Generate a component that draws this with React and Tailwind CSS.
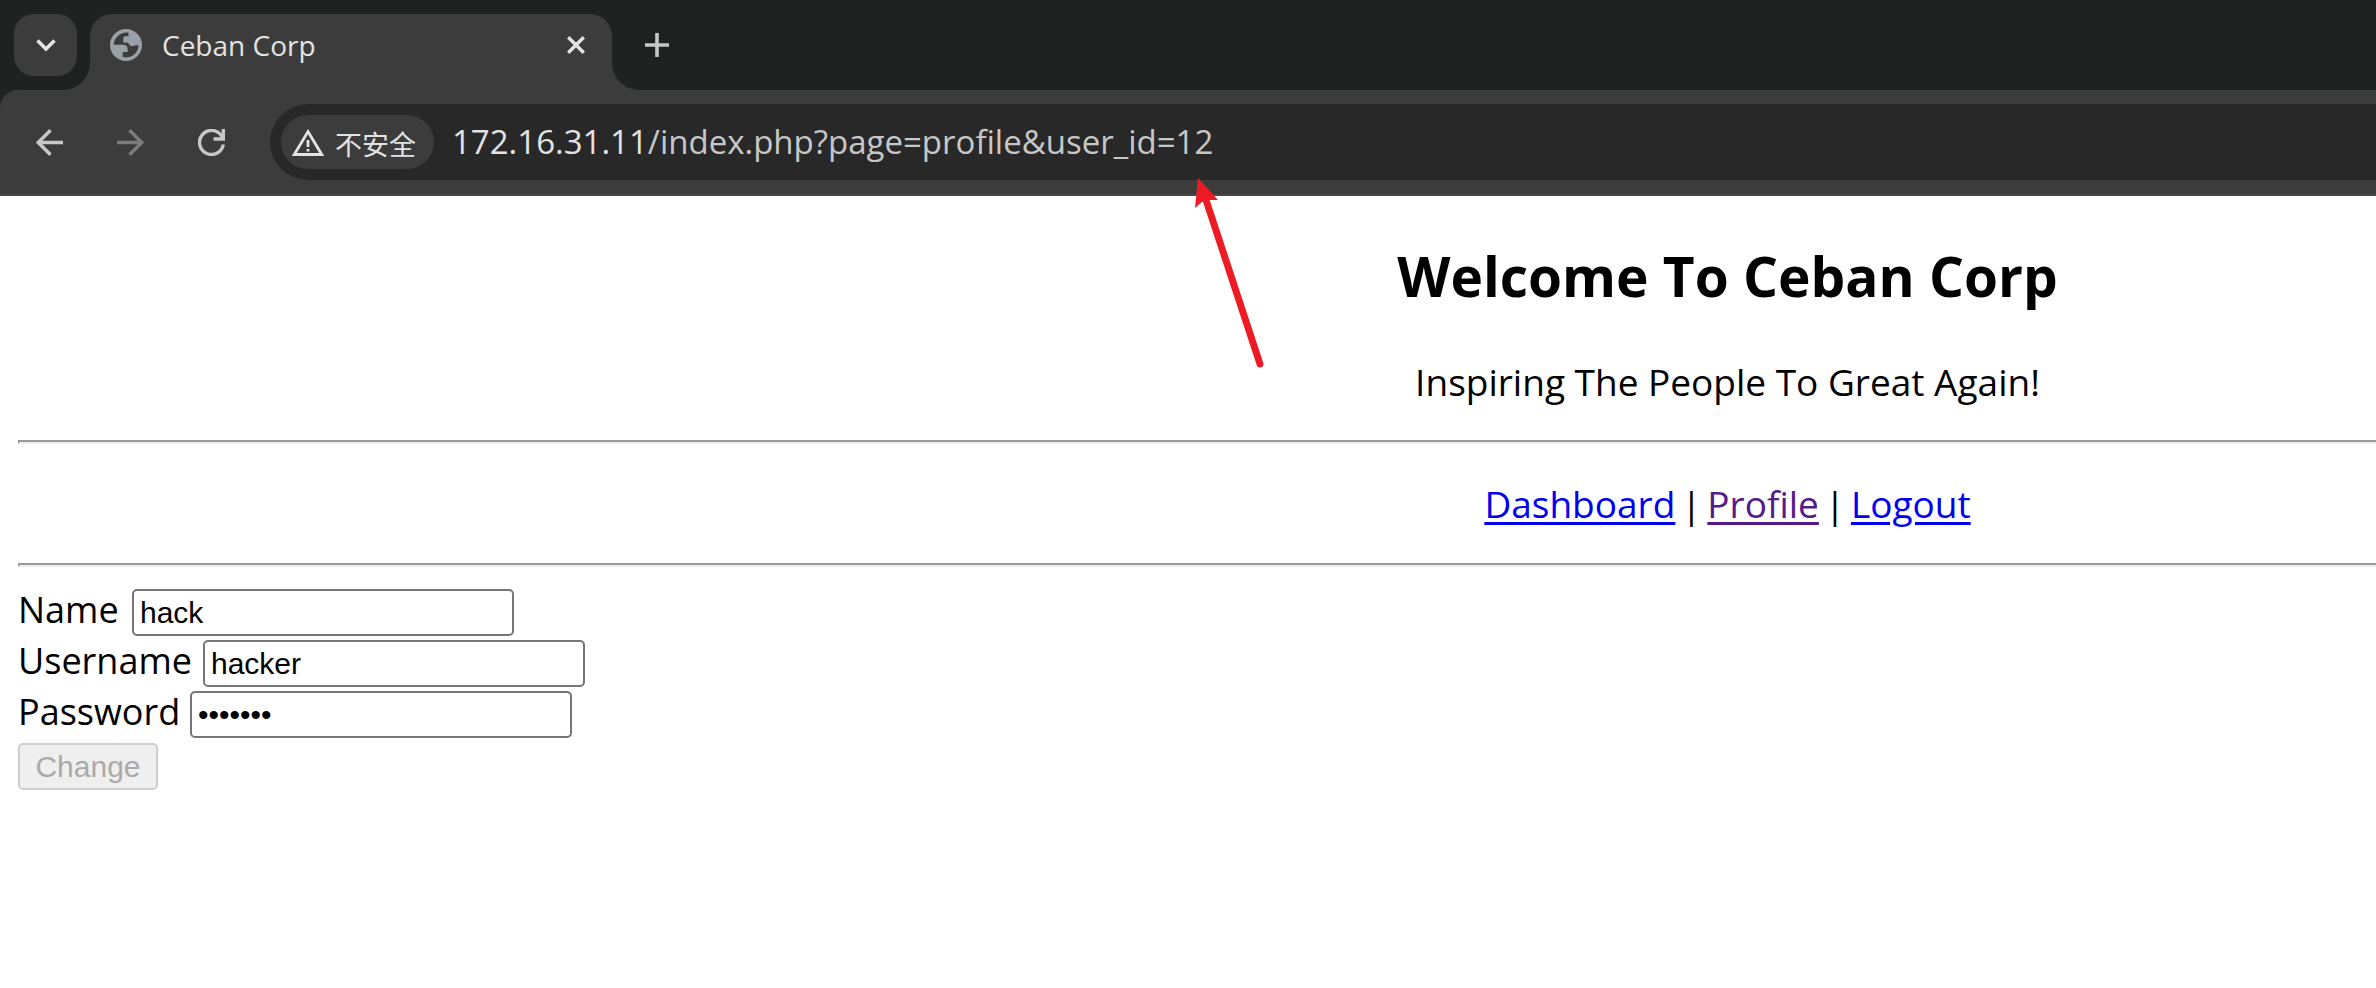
const rows = [
  { id: "name", label: "Name", type: "text", value: "hack", width: "w-[105px]" },
  { id: "username", label: "Username", type: "text", value: "hacker", width: "w-[176px]" },
  { id: "password", label: "Password", type: "password", value: "hackers", width: "w-[163px]" },
];

function TabStrip() {
  return (
    <header className="flex h-[90px] items-start bg-[#1f2221] pt-[14px] pl-[14px] text-[#e3e3e3]">
      <button aria-label="Search tabs" className="flex h-[62px] w-[63px] items-center justify-center rounded-[20px] bg-[#3c3c3c]">
        <svg width="20" height="14" viewBox="0 0 20 14" fill="none" stroke="currentColor" strokeWidth="3.6">
          <path d="M1.5 2.5 10 11l8.500-8.500" />
        </svg>
      </button>
      <div className="relative ml-[13px] flex h-[76px] w-[522px] items-start rounded-t-[22px] bg-[#3c3c3c] pt-[13px] pr-6 pl-5">
        <svg className="absolute bottom-0 -left-7" width="28" height="28" viewBox="0 0 28 28" fill="#3c3c3c">
          <path d="M28 0v28H0C16 28 28 16 28 0z" />
        </svg>
        <svg className="absolute -right-7 bottom-0" width="28" height="28" viewBox="0 0 28 28" fill="#3c3c3c">
          <path d="M0 0v28h28C12 28 0 16 0 0z" />
        </svg>
        <svg className="mt-[2px]" width="32" height="32" viewBox="0 0 32 32">
          <circle cx="16" cy="16" r="16" fill="#9aa0a8" />
          <path
            fill="#3c3c3c"
            d="M18.500 3.700C11 2.500 4.300 8 3.700 15.700H13c3.200 0 4.700 1.800 4.700 4.800v2.500h-5v4.800c8.200 2.700 15.800-3.300 15.800-11.700l-4.400 0.300c-1.500 1.300-3.500 1-4.800-0.600-0.500-1.600-1.300-2.200-2.800-2.200h-3.200V9.500c0-1.500 0.800-2.200 2-2.200h3.200z"
          />
        </svg>
        <span className="flex-1 pl-5 text-[28px] leading-[36px] whitespace-nowrap">Ceban Corp</span>
        <button aria-label="Close tab" className="flex h-9 w-6 items-center justify-center">
          <svg width="18" height="18" viewBox="0 0 18 18" stroke="currentColor" strokeWidth="3.400">
            <path d="M1.200 1.200l15.600 15.600M16.800 1.200 1.200 16.800" />
          </svg>
        </button>
      </div>
      <button aria-label="New tab" className="ml-[28px] flex h-[62px] w-[34px] items-center justify-center text-[#c7c7c7]">
        <svg width="24" height="24" viewBox="0 0 24 24" stroke="currentColor" strokeWidth="3.600">
          <path d="M12 0v24M0 12h24" />
        </svg>
      </button>
    </header>
  );
}

function Toolbar() {
  return (
    <div className="bg-[#1f2221]">
      <div className="flex h-[106px] items-start rounded-tl-[18px] border-b-2 border-[#484747] bg-[#3c3c3c] pt-[14px] pl-9 text-[#c7c7c7]">
        <nav className="flex h-[76px] items-center gap-[54px]">
          <button aria-label="Back">
            <svg width="27" height="27" viewBox="0 0 27 27" fill="none" stroke="currentColor" strokeWidth="3.400">
              <path d="M27 13.500H2.500M14.500 1.200 2.200 13.500l12.300 12.300" />
            </svg>
          </button>
          <button aria-label="Forward" className="text-[#7b7b7b]">
            <svg width="27" height="27" viewBox="0 0 27 27" fill="none" stroke="currentColor" strokeWidth="3.400">
              <path d="M0 13.500h24.500M12.500 1.200l12.300 12.300-12.300 12.300" />
            </svg>
          </button>
          <button aria-label="Reload">
            <svg width="27" height="27" viewBox="0 0 27 27" fill="none" stroke="currentColor" strokeWidth="3.400">
              <path d="M25.300 15.500A12 12 0 1 1 22.500 5.500L25 9" />
              <path d="M25.300 0v10H15.500" />
            </svg>
          </button>
        </nav>
        <div className="ml-[45px] flex h-[76px] flex-1 items-center rounded-l-full bg-[#282828] pl-[11px] whitespace-nowrap">
          <button className="flex h-[54px] w-[153px] items-center rounded-full bg-[#3c3c3c] pl-[11px] text-[27px] leading-[36px] text-[#e3e3e3]">
            <svg width="32" height="27" viewBox="0 0 32 27" fill="none" stroke="currentColor" strokeWidth="2.800">
              <path d="M16 2.600 2.300 25.500h27.400z" />
              <path d="M16 11v7M16 20v2.600" />
            </svg>
            <span className="pt-1 pl-[11px] font-['Noto_Sans_CJK_SC',sans-serif]">不安全</span>
          </button>
          <span className="pl-[18px] text-[33px] leading-[44px]">
            <span className="text-[#e3e3e3]">172.16.31.11</span>/index.php?page=profile&amp;user_id=12
          </span>
        </div>
      </div>
    </div>
  );
}

function Separator() {
  return <span className="w-8 text-center">|</span>;
}

export default function App() {
  return (
    <div className="relative min-h-screen overflow-hidden bg-white font-['Open_Sans','Noto_Sans_CJK_SC',sans-serif] text-black">
      <TabStrip />
      <Toolbar />
      <main className="pl-[18px] text-[37px] leading-[48px]">
        <div className="w-[145%] text-center">
          <h1 className="pt-[44px] text-[55px] leading-[72px] font-bold">Welcome To Ceban Corp</h1>
          <p className="pt-[46px] pb-[34px]">Inspiring The People To Great Again!</p>
          <hr className="h-1 border-t-2 border-b-2 border-l-2 border-t-[#9a9a9a] border-b-[#eeeeee] border-l-[#9a9a9a]" />
          <nav className="flex justify-center pt-9 pb-[35px] [&>a]:underline [&>a]:decoration-[3px] [&>a]:underline-offset-4">
            <a href="#dashboard" className="text-[#0000ee]">Dashboard</a>
            <Separator />
            <a href="#profile" className="text-[#551a8b]">Profile</a>
            <Separator />
            <a href="#logout" className="text-[#0000ee]">Logout</a>
          </nav>
          <hr className="h-1 border-t-2 border-b-2 border-l-2 border-t-[#9a9a9a] border-b-[#eeeeee] border-l-[#9a9a9a]" />
        </div>
        <form className="pt-5" onSubmit={(e) => e.preventDefault()}>
          {rows.map((row) => (
            <div key={row.id} className="flex h-[51px] items-center gap-[9px]">
              <label htmlFor={row.id} className={`${row.width} pb-1.5 text-[36px] whitespace-nowrap`}>{row.label}</label>
              <input
                id={row.id}
                type={row.type}
                defaultValue={row.value}
                className="h-[47px] w-[382px] rounded-[5px] border-2 border-[#767676] bg-white px-1.5 font-['Liberation_Sans',sans-serif] text-[30px] leading-[36px] outline-none"
              />
            </div>
          ))}
          <button disabled className="mt-[3px] block h-[47px] w-[140px] rounded-[5px] border-2 border-[#cfcfcf] bg-[#efefef] font-['Liberation_Sans',sans-serif] text-[30px] leading-[36px] text-[#aaaaaa]">
            Change
          </button>
        </form>
      </main>
      <svg className="absolute top-[170px] left-[1180px]" width="100" height="205" viewBox="1180 170 100 205">
        <path d="M1206 200 1260 364" stroke="#ed1c24" strokeWidth="7" strokeLinecap="round" />
        <path d="M1198 178l20 22-10 0-6 2-7 6z" fill="#ed1c24" />
      </svg>
    </div>
  );
}
